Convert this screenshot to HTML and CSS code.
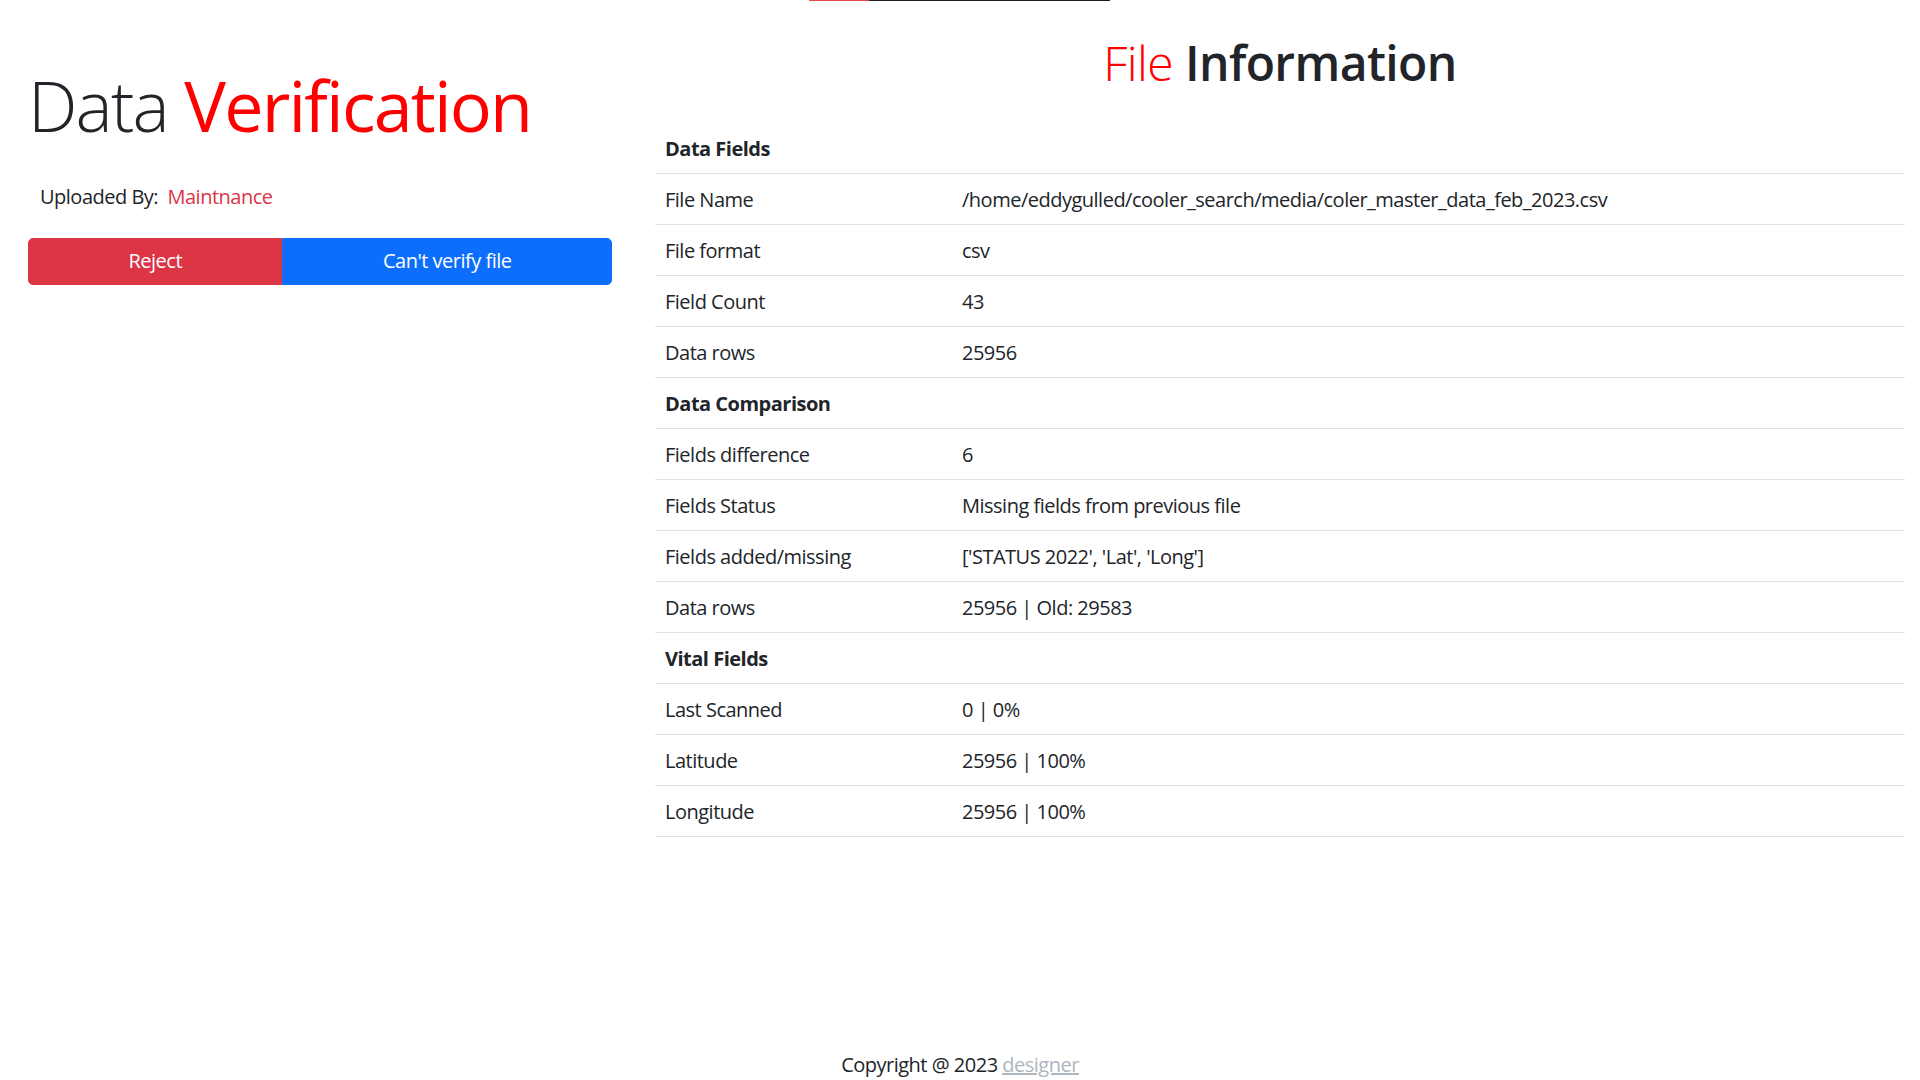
FILE: index.html
```html
<!DOCTYPE html>
<html lang="en">
<head>
<meta charset="utf-8">
<title>Data Verification</title>
<link rel="stylesheet" href="styles.css">
</head>
<body>
<div class="page">
  <div class="topbar"><span class="topbar-red"></span><span class="topbar-dark"></span></div>
  <div class="row">
    <section class="left">
      <h1 class="title"><span class="light">Data</span> <span class="red">Verification</span></h1>
      <p class="uploaded">Uploaded By: &nbsp;<span class="uploader">Maintnance</span></p>
      <div class="btn-group">
        <button class="btn btn-reject">Reject</button>
        <button class="btn btn-blue">Can't verify file</button>
      </div>
    </section>
    <section class="right">
      <h2 class="info-title"><span class="file">File</span> Information</h2>
      <table class="info-table">
        <tbody>
          <tr><th colspan="2">Data Fields</th></tr>
          <tr><td class="label">File Name</td><td>/home/eddygulled/cooler_search/media/coler_master_data_feb_2023.csv</td></tr>
          <tr><td class="label">File format</td><td>csv</td></tr>
          <tr><td class="label">Field Count</td><td>43</td></tr>
          <tr><td class="label">Data rows</td><td>25956</td></tr>
          <tr><th colspan="2">Data Comparison</th></tr>
          <tr><td class="label">Fields difference</td><td>6</td></tr>
          <tr><td class="label">Fields Status</td><td>Missing fields from previous file</td></tr>
          <tr><td class="label">Fields added/missing</td><td>['STATUS 2022', 'Lat', 'Long']</td></tr>
          <tr><td class="label">Data rows</td><td>25956 | Old: 29583</td></tr>
          <tr><th colspan="2">Vital Fields</th></tr>
          <tr><td class="label">Last Scanned</td><td>0 | 0%</td></tr>
          <tr><td class="label">Latitude</td><td>25956 | 100%</td></tr>
          <tr><td class="label">Longitude</td><td>25956 | 100%</td></tr>
        </tbody>
      </table>
    </section>
  </div>
  <footer class="footer">Copyright @ 2023 <a class="designer" href="#">designer</a></footer>
</div>
</body>
</html>
```

FILE: styles.css
```css
* { box-sizing: border-box; }
html, body { margin: 0; padding: 0; }
body {
  font-family: "Open Sans", "Noto Sans", sans-serif;
  font-size: 20px;
  line-height: 1.5;
  letter-spacing: -0.5px;
  color: #212529;
  background: #fff;
}
.page {
  min-height: 100vh;
  display: flex;
  flex-direction: column;
}
.topbar {
  display: flex;
  height: 1px;
  margin-left: 809px;
}
.topbar-red { width: 60px; background: #e4464f; }
.topbar-dark { width: 241px; background: #1e1e1e; }

.row { display: flex; }
.left {
  width: 640px;
  padding: 0 28px;
}
.right {
  width: 1280px;
  padding: 0 15px;
}
.title {
  margin: 62px 0 0 0;
  font-size: 70px;
  line-height: 1.2;
  font-weight: 400;
  letter-spacing: -1.8px;
}
.light { font-weight: 300; }
.red { color: #ff0000; }
.uploaded {
  margin: 35px 0 0 0;
  padding-left: 12px;
}
.uploader { color: #dc3545; }
.btn-group {
  display: flex;
  margin-top: 26px;
}
.btn {
  flex: 1 1 auto;
  font-family: inherit;
  font-size: 20px;
  line-height: 1.5;
  letter-spacing: -0.5px;
  padding: 6.5px 15px 8.5px;
  border: 1px solid transparent;
  color: #fff;
  cursor: pointer;
}
.btn-reject {
  background: #dc3545;
  border-color: #dc3545;
  border-radius: 5px 0 0 5px;
}
.btn-blue {
  background: #0d6efd;
  border-color: #0d6efd;
  border-radius: 0 5px 5px 0;
}
.info-title {
  margin: 33px 0 0 0;
  text-align: center;
  font-size: 48px;
  line-height: 1.2;
  font-weight: 600;
  letter-spacing: -0.6px;
}
.file { color: #ff0000; font-weight: 300; }
.info-table {
  width: 100%;
  margin-top: 31px;
  border-collapse: collapse;
}
.info-table th, .info-table td {
  padding: 11px 10px 9px;
  border-bottom: 1px solid #dee2e6;
  text-align: left;
  vertical-align: top;
}
.info-table th { font-weight: 700; }
.info-table td.label { width: 297px; }
.footer {
  margin-top: auto;
  padding-top: 1px;
  text-align: center;
}
.designer { color: #adb5bd; }
```
